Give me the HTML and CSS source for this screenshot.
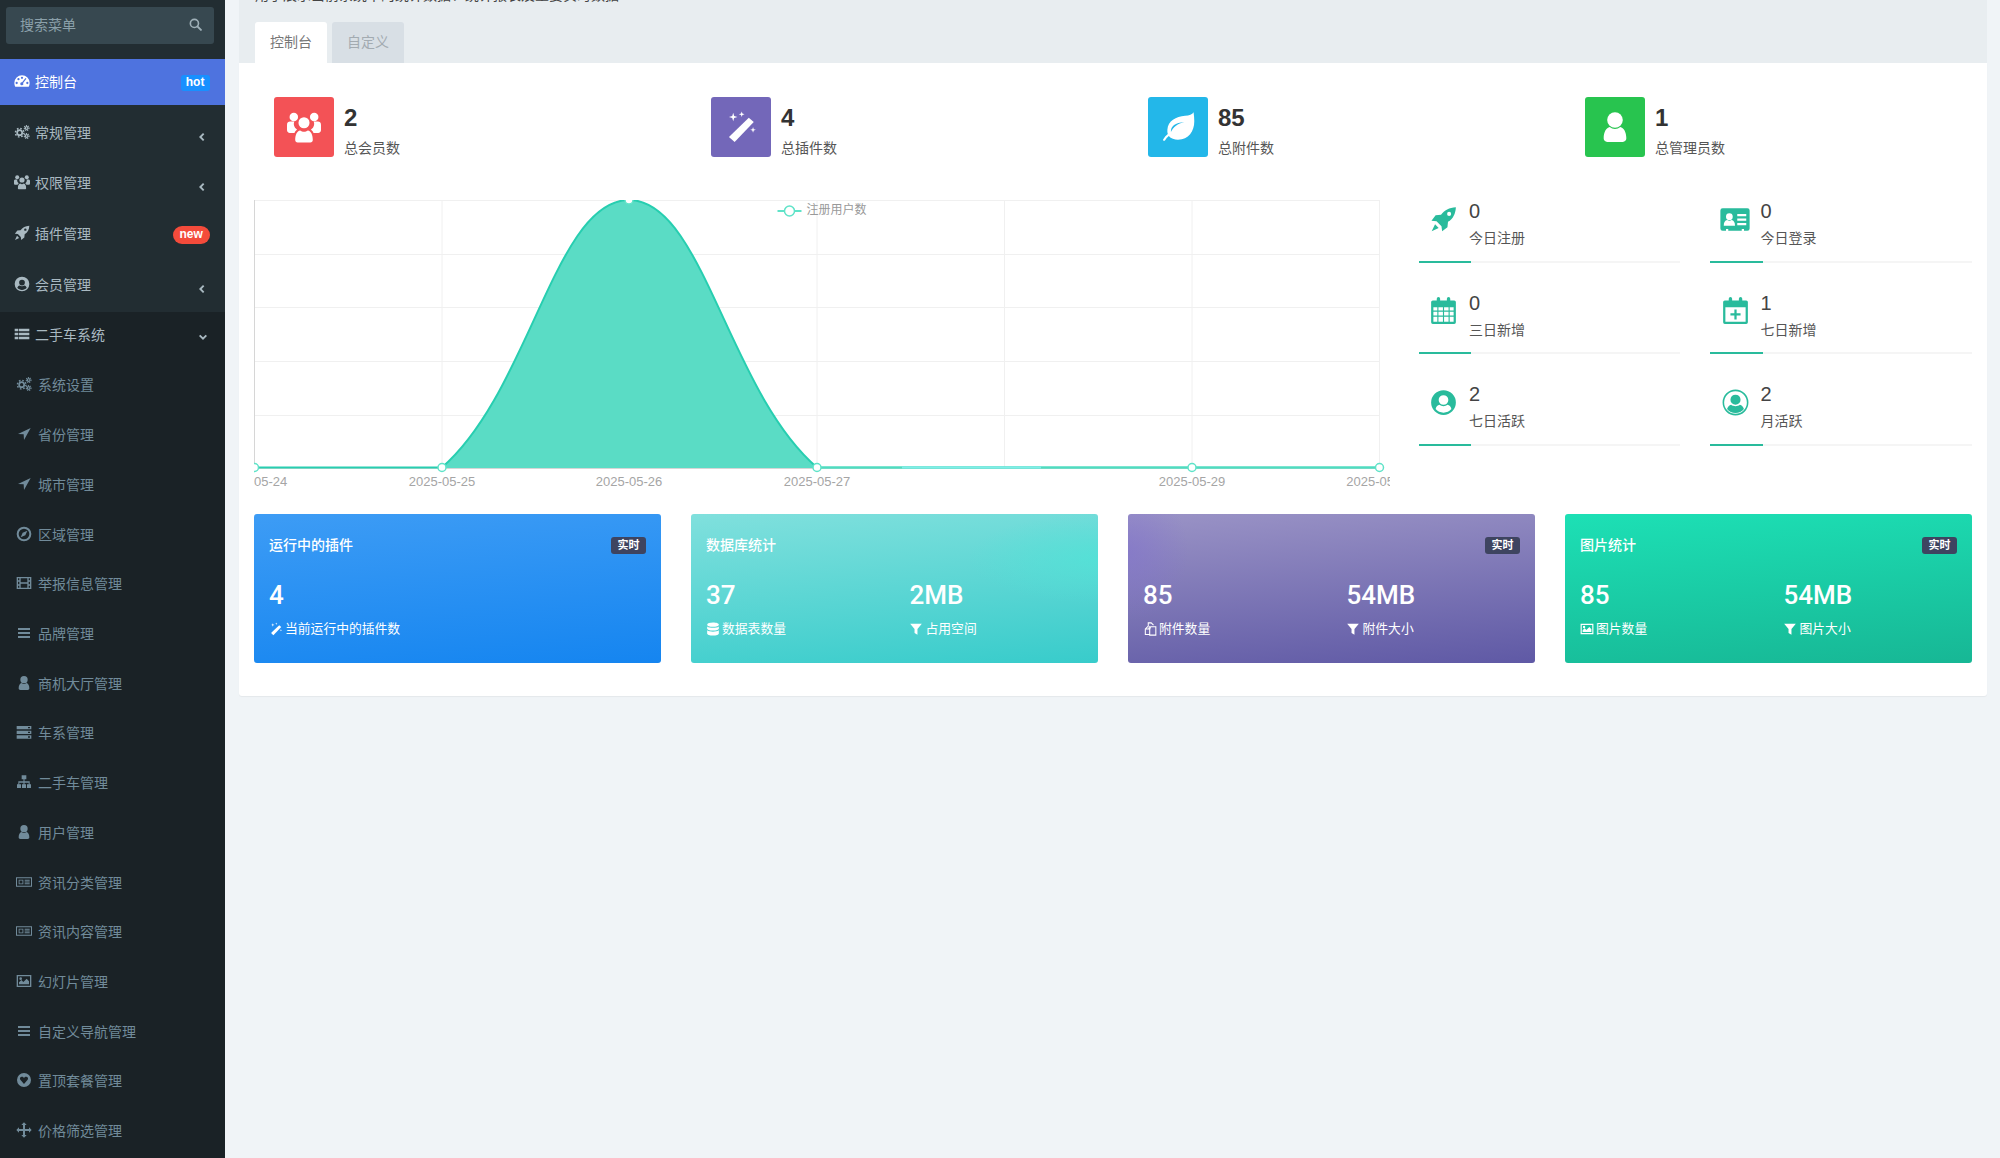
FILE: index.html
```html
<!DOCTYPE html>
<html lang="zh-CN">

<head>
  <meta charset="UTF-8" />
  <title>控制台</title>
  <link rel="stylesheet" href="styles.css">
</head>

<body>
  <!-- icon sprite -->
  <svg class="sprite" xmlns="http://www.w3.org/2000/svg">
    <symbol id="i-search" viewBox="0 0 24 24"><circle cx="10" cy="10" r="7.5" fill="none" stroke="currentColor" stroke-width="3"/><path d="M15.5 15.5 22 22" stroke="currentColor" stroke-width="3.6" stroke-linecap="round"/></symbol>
    <symbol id="i-dash" viewBox="0 0 24 24"><path fill="currentColor" fill-rule="evenodd" d="M12 3.5A11.5 11.5 0 0 0 .5 15c0 2 .5 3.9 1.4 5.5h20.2c.9-1.6 1.4-3.5 1.4-5.5A11.500 11.500 0 0 0 12 3.500zM4 13.300a1.700 1.700 0 1 1 0 3.400 1.700 1.700 0 0 1 0-3.400zM6.700 7.500a1.700 1.700 0 1 1 0 3.400 1.700 1.700 0 0 1 0-3.400zM12 5.500a1.700 1.700 0 1 1 0 3.400 1.700 1.700 0 0 1 0-3.400zM20 13.300a1.700 1.700 0 1 1 0 3.400 1.700 1.700 0 0 1 0-3.400zM17.300 7.500l1.300 1-4.900 6.400a2.300 2.300 0 1 1-1.500-1.100z"/></symbol>
    <symbol id="i-cogs" viewBox="0 0 24 24"><g fill="none" stroke="currentColor"><circle cx="8.500" cy="13" r="3.800" stroke-width="2.600"/><circle cx="8.500" cy="13" r="6.400" stroke-width="2.200" stroke-dasharray="2.500 2.530"/><circle cx="19" cy="6" r="2" stroke-width="1.800"/><circle cx="19" cy="6" r="3.600" stroke-width="1.600" stroke-dasharray="1.600 1.230"/><circle cx="19" cy="18" r="2" stroke-width="1.800"/><circle cx="19" cy="18" r="3.600" stroke-width="1.600" stroke-dasharray="1.600 1.230"/></g></symbol>
    <symbol id="i-group" viewBox="0 0 24 24"><g fill="currentColor"><circle cx="4.800" cy="5" r="3"/><circle cx="19.200" cy="5" r="3"/><path d="M0 10.500c0-1.500 1-2.300 2.200-2.300h3c-.5 1-.6 2.500.2 3.800.5.900 1.300 1.500 1.800 1.800-.8.600-1.500 1.300-1.900 2.400H2c-1.200 0-2-.8-2-2zM24 10.500c0-1.500-1-2.300-2.200-2.300h-3c.5 1 .6 2.500-.2 3.800-.5.900-1.300 1.500-1.800 1.800.8.600 1.500 1.300 1.900 2.400H22c1.200 0 2-.8 2-2z"/><circle cx="12" cy="9" r="3.900"/><path d="M7.500 23c-1 0-1.700-.7-1.700-1.800 0-3.500 1.200-6.500 3.500-6.800 1.600 1.300 3.800 1.300 5.400 0 2.300.3 3.500 3.300 3.500 6.800 0 1.100-.7 1.800-1.700 1.800z"/></g></symbol>
    <symbol id="i-rocket" viewBox="0 0 24 24"><path fill="currentColor" fill-rule="evenodd" d="M23 1c-5.800.3-10.300 2.700-13.200 6.800L5 8.300 1.300 13l4.500.6 4.400 4.400.6 4.500 4.700-3.700.5-4.800C20.600 11.300 22.700 6.800 23 1zM17 5.200a1.800 1.800 0 1 1 0 3.600 1.800 1.800 0 0 1 0-3.600zM4.500 16.300 1.500 22.500l6.200-3z"/></symbol>
    <symbol id="i-ucircle" viewBox="0 0 24 24"><path fill="currentColor" fill-rule="evenodd" d="M12 1a11 11 0 1 0 0 22 11 11 0 0 0 0-22zM12 5.500a4.300 4.300 0 1 1 0 8.600 4.300 4.300 0 0 1 0-8.600zM12 21c-2.800 0-5.300-1.200-7-3.200.5-2 1.800-3.400 3.400-3.700 2 1.600 5.200 1.600 7.200 0 1.600.3 2.900 1.700 3.400 3.700-1.700 2-4.200 3.200-7 3.200z"/></symbol>
    <symbol id="i-ucircle2" viewBox="0 0 24 24"><circle cx="12" cy="12" r="10.800" fill="none" stroke="currentColor" stroke-width="1.400"/><path fill="currentColor" d="M12 5a4.500 4.500 0 1 1 0 9 4.500 4.500 0 0 1 0-9zM4.500 17.800c.6-2 1.900-3.400 3.600-3.800 2.200 1.700 5.600 1.700 7.800 0 1.700.4 3 1.800 3.600 3.800-1.800 2.200-4.500 3.600-7.500 3.600s-5.700-1.400-7.500-3.600z"/></symbol>
    <symbol id="i-list" viewBox="0 0 24 24"><path fill="currentColor" d="M1 4h5v4H1zM7 4h16v4H7zM1 10h5v4H1zM7 10h16v4H7zM1 16h5v4H1zM7 16h16v4H7z"/></symbol>
    <symbol id="i-arrow" viewBox="0 0 24 24"><path fill="currentColor" d="M22 3 3 12l8.500.5L12 21z"/></symbol>
    <symbol id="i-compass" viewBox="0 0 24 24"><circle cx="12" cy="12" r="9.500" fill="none" stroke="currentColor" stroke-width="3"/><path fill="currentColor" d="m17 7-7 3-3 7 7-3z"/></symbol>
    <symbol id="i-film" viewBox="0 0 24 24"><path fill="currentColor" fill-rule="evenodd" d="M1 3h22v18H1zM3 5v3h2V5zM3 10v4h2v-4zM3 16v3h2v-3zM19 5v3h2V5zM19 10v4h2v-4zM19 16v3h2v-3zM7 5v6h10V5zM7 13v6h10v-6z"/></symbol>
    <symbol id="i-bars" viewBox="0 0 24 24"><path fill="currentColor" d="M3 4.500h18v3H3zM3 10.500h18v3H3zM3 16.500h18v3H3z"/></symbol>
    <symbol id="i-user" viewBox="0 0 24 24"><circle cx="12" cy="7" r="5.500" fill="currentColor"/><path fill="currentColor" d="M4 20c0-4.500 1.800-7.500 4.300-8 2 1.800 5.400 1.800 7.400 0 2.500.5 4.300 3.500 4.300 8 0 1.500-1 2.500-2.500 2.500h-11C5 22.500 4 21.500 4 20z"/></symbol>
    <symbol id="i-server" viewBox="0 0 24 24"><path fill="currentColor" fill-rule="evenodd" d="M1 3h22v5H1zM1 10h22v5H1zM1 17h22v5H1zM18 4.500v2h3v-2zM18 11.500v2h3v-2zM18 18.500v2h3v-2z"/></symbol>
    <symbol id="i-sitemap" viewBox="0 0 24 24"><path fill="currentColor" d="M8.500 2h7v6h-2.700v3H20.500v4.500h2V21h-6v-5.500h2.500V13h-6.200v2.500H15V21H9v-5.500h2.200V13H5v2.500h2.500V21h-6v-5.500h2V11h7.700V8H8.500z"/></symbol>
    <symbol id="i-news" viewBox="0 0 24 24"><path fill="currentColor" fill-rule="evenodd" d="M0 5h24v14H0zM1.500 6.500v11h21v-11zM4 8.500h7v7H4zM5.300 9.800v4.400h4.400V9.800zM13 8.500h7.500v1.500H13zM13 11.200h7.500v1.500H13zM13 14h7.500v1.500H13z"/></symbol>
    <symbol id="i-pic" viewBox="0 0 24 24"><path fill="currentColor" fill-rule="evenodd" d="M1 3h22v18H1zM3 5v14h18V5zM4.500 17v-3l3.500-3.500 3 3L16 8.500l3.500 4V17zM7 6.500a2 2 0 1 1 0 4 2 2 0 0 1 0-4z"/></symbol>
    <symbol id="i-heart" viewBox="0 0 24 24"><path fill="currentColor" fill-rule="evenodd" d="M12 1.500a10.500 10.500 0 1 0 0 21 10.500 10.500 0 0 0 0-21zM12 18l-5.500-6.300C5 9.500 6.500 7 8.700 7c1.500 0 2.500.8 3.300 2 .8-1.200 1.800-2 3.300-2 2.200 0 3.700 2.500 2.200 4.700z"/></symbol>
    <symbol id="i-move" viewBox="0 0 24 24"><path fill="currentColor" d="m12 .5 4 4h-2.500v6h6V8l4 4-4 4v-2.500h-6v6H16l-4 4-4-4h2.500v-6h-6V16l-4-4 4-4v2.500h6v-6H8z"/></symbol>
    <symbol id="i-left" viewBox="0 0 24 24"><path d="M16 4 8 12l8 8" fill="none" stroke="currentColor" stroke-width="4.500"/></symbol>
    <symbol id="i-down" viewBox="0 0 24 24"><path d="m4 8 8 8 8-8" fill="none" stroke="currentColor" stroke-width="4.500"/></symbol>
    <symbol id="i-wand" viewBox="0 0 24 24"><path fill="currentColor" d="M17.500 5.500 21 8.500 7.500 22.500 3.500 19z"/><path fill="currentColor" d="m6.500 2 .7 2.300 2.300.7-2.300.7-.7 2.300-.7-2.300L3.500 5l2.300-.7zM12.500 1l.5 1.500 1.500.5-1.500.5-.5 1.500-.5-1.500L10.500 3l1.500-.5zM20.500 12l.5 1.500 1.500.5-1.500.5-.5 1.500-.5-1.500-1.500-.5 1.500-.5z"/></symbol>
    <symbol id="i-leaf" viewBox="0 0 24 24"><path fill="currentColor" fill-rule="evenodd" d="M23 1.500c-1 1.500-3 2.300-6 2.600C10.500 4.800 5 7.500 4.500 14c-.1 1 0 2 .3 3-1.400 1.200-2.500 2.400-3.300 3.800-.4.700.8 1.400 1.300.7.700-1.200 1.700-2.300 2.700-3.200 1.500 1.800 4 2.700 6.500 2.700 7.500 0 11.500-6 11.500-13 0-2.300-.2-4.500-.5-6.500zM7 15.500c-.2-4 3-6.500 9.500-7-4.800 1.200-7.800 3.500-9.500 7z"/></symbol>
    <symbol id="i-card" viewBox="0 0 26 24"><path fill="currentColor" fill-rule="evenodd" d="M2 2h22a2 2 0 0 1 2 2v16a2 2 0 0 1-2 2h-3v-1.500h-2V22H7v-1.500H5V22H2a2 2 0 0 1-2-2V4a2 2 0 0 1 2-2zM8 6.500a3 3 0 1 0 0 6 3 3 0 0 0 0-6zM3 17.500h10c0-3-1.200-4.800-3-5-1.200.8-2.800.8-4 0-1.800.2-3 2-3 5zM15 7v2h8V7zM15 11v2h8v-2zM15 15v2h8v-2z"/></symbol>
    <symbol id="i-cal" viewBox="0 0 24 24"><path fill="currentColor" fill-rule="evenodd" d="M2.500 3H6V1.500a1.500 1.500 0 0 1 3 0V3h6V1.500a1.500 1.500 0 0 1 3 0V3h3.500A1.500 1.500 0 0 1 23 4.500v18a1.500 1.500 0 0 1-1.500 1.500h-19A1.500 1.500 0 0 1 1 22.500v-18A1.500 1.500 0 0 1 2.500 3zM3 9v3h3.500V9zM7.500 9v3h4V9zM12.500 9v3h4V9zM17.500 9v3H21V9zM3 13v3.500h3.500V13zM7.500 13v3.500h4V13zM12.500 13v3.500h4V13zM17.500 13v3.500H21V13zM3 17.500V22h3.500v-4.500zM7.500 17.500V22h4v-4.500zM12.500 17.500V22h4v-4.500zM17.500 17.500V22H21v-4.500z"/></symbol>
    <symbol id="i-calplus" viewBox="0 0 24 24"><path fill="currentColor" fill-rule="evenodd" d="M2.500 3H6V1.500a1.500 1.500 0 0 1 3 0V3h6V1.500a1.500 1.500 0 0 1 3 0V3h3.500A1.500 1.500 0 0 1 23 4.500v18a1.500 1.500 0 0 1-1.500 1.500h-19A1.500 1.500 0 0 1 1 22.500v-18A1.500 1.500 0 0 1 2.500 3zM3 9v13h18V9zM11 11h2v3.500h3.500v2H13V20h-2v-3.500H7.500v-2H11z"/></symbol>
    <symbol id="i-db" viewBox="0 0 24 24"><path fill="currentColor" d="M12 1c5.500 0 10 1.500 10 3.500S17.500 8 12 8 2 6.500 2 4.500 6.500 1 12 1zM2 7.500C4 9.200 8 10 12 10s8-.8 10-2.500V11c0 2-4.500 3.500-10 3.500S2 13 2 11zM2 14c2 1.700 6 2.500 10 2.500s8-.8 10-2.500v5.500c0 2-4.500 3.500-10 3.500S2 21.500 2 19.500z"/></symbol>
    <symbol id="i-filter" viewBox="0 0 24 24"><path fill="currentColor" d="M2 3h20l-7.500 9v10l-5-3v-7z"/></symbol>
    <symbol id="i-files" viewBox="0 0 24 24"><path fill="none" stroke="currentColor" stroke-width="1.800" d="M9 7V1.500h5l4 4M9 7 4 12v9.500h7M11 7l-1 5H5M13 8h9v14.500H11.500V13z"/></symbol>
  </svg>

  <aside class="sidebar">
    <div class="search-box">
      <span>搜索菜单</span>
      <svg class="search-icon"><use href="#i-search"/></svg>
    </div>
    <ul class="menu">
      <li class="menu-item active">
        <svg class="icon"><use href="#i-dash"/></svg><span class="menu-text">控制台</span><em class="tag tag-hot">hot</em>
      </li>
      <li class="menu-item">
        <svg class="icon"><use href="#i-cogs"/></svg><span class="menu-text">常规管理</span><svg class="caret"><use href="#i-left"/></svg>
      </li>
      <li class="menu-item">
        <svg class="icon"><use href="#i-group"/></svg><span class="menu-text">权限管理</span><svg class="caret"><use href="#i-left"/></svg>
      </li>
      <li class="menu-item">
        <svg class="icon"><use href="#i-rocket"/></svg><span class="menu-text">插件管理</span><em class="tag tag-new">new</em>
      </li>
      <li class="menu-item">
        <svg class="icon"><use href="#i-ucircle"/></svg><span class="menu-text">会员管理</span><svg class="caret"><use href="#i-left"/></svg>
      </li>
      <li class="menu-open">
        <div class="menu-item open-head">
          <svg class="icon"><use href="#i-list"/></svg><span class="menu-text">二手车系统</span><svg class="caret caret-down"><use href="#i-down"/></svg>
        </div>
        <ul class="submenu">
          <li><svg class="icon"><use href="#i-cogs"/></svg>系统设置</li>
          <li><svg class="icon"><use href="#i-arrow"/></svg>省份管理</li>
          <li><svg class="icon"><use href="#i-arrow"/></svg>城市管理</li>
          <li><svg class="icon"><use href="#i-compass"/></svg>区域管理</li>
          <li><svg class="icon"><use href="#i-film"/></svg>举报信息管理</li>
          <li><svg class="icon"><use href="#i-bars"/></svg>品牌管理</li>
          <li><svg class="icon"><use href="#i-user"/></svg>商机大厅管理</li>
          <li><svg class="icon"><use href="#i-server"/></svg>车系管理</li>
          <li><svg class="icon"><use href="#i-sitemap"/></svg>二手车管理</li>
          <li><svg class="icon"><use href="#i-user"/></svg>用户管理</li>
          <li><svg class="icon"><use href="#i-news"/></svg>资讯分类管理</li>
          <li><svg class="icon"><use href="#i-news"/></svg>资讯内容管理</li>
          <li><svg class="icon"><use href="#i-pic"/></svg>幻灯片管理</li>
          <li><svg class="icon"><use href="#i-bars"/></svg>自定义导航管理</li>
          <li><svg class="icon"><use href="#i-heart"/></svg>置顶套餐管理</li>
          <li><svg class="icon"><use href="#i-move"/></svg>价格筛选管理</li>
        </ul>
      </li>
    </ul>
  </aside>

  <main class="content">
    <div class="panel-head">
      <p class="page-desc">用于展示当前系统中的统计数据、统计报表及重要实时数据</p>
      <div class="tabs">
        <a class="tab current">控制台</a>
        <a class="tab">自定义</a>
      </div>
    </div>

    <div class="panel-body">
      <div class="top-stats">
        <div class="top-stat">
          <div class="stat-box bg-red"><svg><use href="#i-group"/></svg></div>
          <div><div class="stat-num">2</div><div class="stat-label">总会员数</div></div>
        </div>
        <div class="top-stat">
          <div class="stat-box bg-purple"><svg><use href="#i-wand"/></svg></div>
          <div><div class="stat-num">4</div><div class="stat-label">总插件数</div></div>
        </div>
        <div class="top-stat">
          <div class="stat-box bg-blue"><svg><use href="#i-leaf"/></svg></div>
          <div><div class="stat-num">85</div><div class="stat-label">总附件数</div></div>
        </div>
        <div class="top-stat">
          <div class="stat-box bg-green"><svg><use href="#i-user"/></svg></div>
          <div><div class="stat-num">1</div><div class="stat-label">总管理员数</div></div>
        </div>
      </div>

      <div class="chart-row">
        <svg class="chart" viewBox="0 0 1136 290">
          <g class="grid-lines">
            <path d="M0 .5H1126M0 54.500H1126M0 107.500H1126M0 161.500H1126M0 215.500H1126"/>
            <path d="M188 0V268M375 0V268M563 0V268M750.500 0V268M938 0V268M1125.500 0V268"/>
          </g>
          <path class="axis" d="M.5 0V268.500H1126"/>
          <path class="area" d="M188 268C276 191 301 0 375 0C449 0 474 191 563 268Z"/>
          <path class="line" d="M0 267.500H188C276 191 301 0 375 0C449 0 474 191 563 267.500"/>
          <path class="base-line" d="M563 267.500H1126"/>
          <path class="base-glint" d="M648 267.500H787"/>
          <g class="points">
            <circle cx=".5" cy="267.500" r="4"/>
            <circle cx="188" cy="267.500" r="4"/>
            <circle cx="375" cy="0" r="4"/>
            <circle cx="563" cy="267.500" r="4"/>
            <circle cx="938" cy="267.500" r="4"/>
            <circle cx="1125.500" cy="267.500" r="4"/>
          </g>
          <path class="legend-line" d="M523.500 11H547.500"/>
          <circle class="legend-dot" cx="535.500" cy="11" r="5"/>
          <text class="legend-text" x="552.500" y="14">注册用户数</text>
          <g class="x-labels">
            <text x="0" y="286">2025-05-24</text>
            <text x="188" y="286">2025-05-25</text>
            <text x="375" y="286">2025-05-26</text>
            <text x="563" y="286">2025-05-27</text>
            <text x="938" y="286">2025-05-29</text>
            <text x="1125.500" y="286">2025-05-30</text>
          </g>
        </svg>

        <div class="side-stats">
          <div class="side-stat">
            <div class="side-top"><div class="side-icon"><svg><use href="#i-rocket"/></svg></div><div><div class="side-num">0</div><div class="side-label">今日注册</div></div></div>
            <div class="progress"><div class="progress-bar"></div></div>
          </div>
          <div class="side-stat">
            <div class="side-top"><div class="side-icon"><svg class="wide"><use href="#i-card"/></svg></div><div><div class="side-num">0</div><div class="side-label">今日登录</div></div></div>
            <div class="progress"><div class="progress-bar"></div></div>
          </div>
          <div class="side-stat">
            <div class="side-top"><div class="side-icon"><svg><use href="#i-cal"/></svg></div><div><div class="side-num">0</div><div class="side-label">三日新增</div></div></div>
            <div class="progress"><div class="progress-bar"></div></div>
          </div>
          <div class="side-stat">
            <div class="side-top"><div class="side-icon"><svg><use href="#i-calplus"/></svg></div><div><div class="side-num">1</div><div class="side-label">七日新增</div></div></div>
            <div class="progress"><div class="progress-bar"></div></div>
          </div>
          <div class="side-stat">
            <div class="side-top"><div class="side-icon"><svg><use href="#i-ucircle"/></svg></div><div><div class="side-num">2</div><div class="side-label">七日活跃</div></div></div>
            <div class="progress"><div class="progress-bar"></div></div>
          </div>
          <div class="side-stat">
            <div class="side-top"><div class="side-icon"><svg><use href="#i-ucircle2"/></svg></div><div><div class="side-num">2</div><div class="side-label">月活跃</div></div></div>
            <div class="progress"><div class="progress-bar"></div></div>
          </div>
        </div>
      </div>

      <div class="cards">
        <div class="card card-blue">
          <div class="card-head"><span>运行中的插件</span><b class="badge">实时</b></div>
          <div class="card-cols">
            <div><div class="card-num">4</div><div class="card-sub"><svg><use href="#i-wand"/></svg>当前运行中的插件数</div></div>
          </div>
        </div>
        <div class="card card-teal">
          <div class="card-head"><span>数据库统计</span></div>
          <div class="card-cols">
            <div><div class="card-num">37</div><div class="card-sub"><svg><use href="#i-db"/></svg>数据表数量</div></div>
            <div><div class="card-num">2MB</div><div class="card-sub"><svg><use href="#i-filter"/></svg>占用空间</div></div>
          </div>
        </div>
        <div class="card card-violet">
          <div class="card-head"><b class="badge">实时</b></div>
          <div class="card-cols">
            <div><div class="card-num">85</div><div class="card-sub"><svg><use href="#i-files"/></svg>附件数量</div></div>
            <div><div class="card-num">54MB</div><div class="card-sub"><svg><use href="#i-filter"/></svg>附件大小</div></div>
          </div>
        </div>
        <div class="card card-mint">
          <div class="card-head"><span>图片统计</span><b class="badge">实时</b></div>
          <div class="card-cols">
            <div><div class="card-num">85</div><div class="card-sub"><svg><use href="#i-pic"/></svg>图片数量</div></div>
            <div><div class="card-num">54MB</div><div class="card-sub"><svg><use href="#i-filter"/></svg>图片大小</div></div>
          </div>
        </div>
      </div>
    </div>
  </main>
</body>

</html>
```

FILE: styles.css
```css
* {
  box-sizing: border-box;
}

html,
body {
  height: 100%;
}

body {
  margin: 0;
  display: flex;
  overflow: hidden;
  background: #f0f4f7;
  font-family: "Liberation Sans", "Noto Sans CJK SC", sans-serif;
  font-size: 14px;
  color: #333;
}

ul {
  list-style: none;
  margin: 0;
  padding: 0;
}

.sprite {
  display: none;
}

/* sidebar */
.sidebar {
  flex: 0 0 224.6px;
  height: 100%;
  overflow: hidden;
  background: #222d32;
  padding-top: 7px;
}

.search-box {
  display: flex;
  justify-content: space-between;
  align-items: center;
  height: 37px;
  margin: 0 10.500px 15px 6px;
  padding: 0 12px 3px 14px;
  background: #374850;
  border-radius: 3px;
  color: #8ba0aa;
}

.search-icon {
  width: 13px;
  height: 13px;
  color: #9fb0b8;
}

.menu-item {
  display: flex;
  align-items: center;
  height: 45.6px;
  margin-bottom: 5px;
  padding: 0 15px 1px 13.500px;
  color: #a9b9c1;
}

.menu-item .icon {
  width: 16px;
  height: 16px;
  margin-right: 5.500px;
  flex: none;
}

.menu-text {
  flex: 1;
}

.menu-item.active {
  background: #4e73df;
  color: #fff;
}

.tag {
  font-style: normal;
  font-weight: bold;
  font-size: 12px;
  color: #fff;
  text-align: center;
  margin-top: 3px;
}

.tag-hot {
  width: 29px;
  height: 16px;
  line-height: 15px;
  background: #1890ff;
  border-radius: 3px;
}

.tag-new {
  width: 37px;
  height: 18px;
  line-height: 17px;
  background: #f44b3b;
  border-radius: 9px;
  margin-top: 4px;
}

.caret {
  width: 10px;
  height: 10px;
  margin-top: 10px;
  margin-right: 3px;
}

.caret-down {
  margin-top: 6px;
  margin-right: 2px;
}

.menu-open {
  background: #1a2226;
  padding-bottom: 40px;
}

.open-head {
  margin-bottom: 0;
}

.submenu {
  padding-top: 2px;
}

.submenu li {
  display: flex;
  align-items: center;
  height: 49.720px;
  padding-left: 15.500px;
  color: #718b9a;
}

.submenu .icon {
  width: 16px;
  height: 16px;
  margin-right: 6.500px;
  flex: none;
}

/* main area */
.content {
  flex: 1;
  min-width: 0;
  padding: 0 13px 0 14.400px;
}

.panel-head {
  display: flow-root;
  background: #e8edf0;
  height: 63px;
  padding-left: 16px;
}

.page-desc {
  margin: -15px 0 0;
  height: 37px;
  line-height: 20px;
  color: #444;
}

.tabs {
  display: flex;
  gap: 5px;
}

.tab {
  width: 72px;
  height: 41px;
  line-height: 41px;
  text-align: center;
  background: #d8dfe5;
  color: #a3abb1;
  border-radius: 3px 3px 0 0;
}

.tab.current {
  background: #fff;
  color: #777;
}

.panel-body {
  background: #fff;
  padding: 34px 15px 33px;
  border-radius: 0 0 3px 3px;
  box-shadow: 0 1px 1px rgba(0, 0, 0, .05);
}

.top-stats {
  display: grid;
  grid-template-columns: repeat(4, 1fr);
  column-gap: 50px;
  padding-left: 20px;
  margin-bottom: 42px;
}

.top-stat {
  display: flex;
}

.stat-box {
  width: 60px;
  height: 60px;
  margin-right: 10px;
  border-radius: 3px;
  color: #fff;
  display: flex;
  align-items: center;
  justify-content: center;
}

.stat-box svg {
  width: 34px;
  height: 34px;
}

.bg-red {
  background: #f35256;
}

.bg-purple {
  background: #7367b9;
}

.bg-blue {
  background: #23b7e9;
}

.bg-green {
  background: #28c44f;
}

.stat-num {
  font-size: 24px;
  font-weight: bold;
  line-height: 30px;
  margin-top: 6px;
  color: #333;
}

.stat-label {
  line-height: 20px;
  margin-top: 5px;
  color: #555;
}

/* chart */
.chart-row {
  display: flex;
  height: 314px;
}

.chart {
  flex: 0 0 1136px;
  width: 1136px;
  height: 290px;
  overflow: hidden;
}

.grid-lines path {
  fill: none;
  stroke: #f0f0f0;
}

.axis {
  fill: none;
  stroke: #d6d6d6;
}

.area {
  fill: #5adcc5;
}

.line {
  fill: none;
  stroke: #27ceb0;
  stroke-width: 2;
}

.base-line {
  fill: none;
  stroke: #4fdcc0;
  stroke-width: 2.500;
}

.base-glint {
  fill: none;
  stroke: #7feee8;
  stroke-width: 2;
}

.points circle {
  fill: #fff;
  stroke: #5fe3c8;
  stroke-width: 1.500;
}

.legend-line {
  stroke: #5fe3c8;
  stroke-width: 2;
}

.legend-dot {
  fill: #fff;
  stroke: #5fe3c8;
  stroke-width: 1.500;
}

.legend-text {
  font-size: 12px;
  fill: #999;
}

.x-labels text {
  font-size: 13px;
  fill: #a5a5a5;
  text-anchor: middle;
}

.side-stats {
  flex: 1;
  margin-left: 29px;
  display: grid;
  grid-template-columns: 1fr 1fr;
  grid-auto-rows: 62.500px;
  column-gap: 30px;
  row-gap: 29px;
}

.side-stat {
  display: flex;
  flex-direction: column;
  justify-content: space-between;
}

.side-top {
  display: flex;
}

.side-icon {
  width: 50px;
  height: 38px;
  display: flex;
  align-items: center;
  justify-content: center;
  color: #29bb9c;
}

.side-icon svg {
  width: 27px;
  height: 27px;
}

.side-icon svg.wide {
  width: 30px;
}

.side-num {
  font-size: 20px;
  line-height: 22px;
  color: #444;
}

.side-label {
  line-height: 20px;
  margin-top: 6px;
  color: #555;
}

.progress {
  height: 2px;
  background: #f5f5f5;
}

.progress-bar {
  width: 20%;
  height: 2px;
  background: #29bb9c;
}

/* bottom cards */
.cards {
  display: grid;
  grid-template-columns: repeat(4, 1fr);
  column-gap: 30px;
}

.card {
  height: 149px;
  padding: 20px 15px;
  border-radius: 3px;
  color: #fff;
}

.card-blue {
  background: linear-gradient(175deg, #3d9cf5, #1585f0);
}

.card-teal {
  background: radial-gradient(ellipse 130px 45px at 100% 30%, rgba(80, 228, 215, .7), transparent),
    linear-gradient(175deg, #80e0dd, #38cccb);
}

.card-violet {
  background: radial-gradient(ellipse 60px 70px at 0 25%, rgba(130, 115, 205, .6), transparent),
    linear-gradient(175deg, #9a93c6, #5f59a5);
}

.card-mint {
  background: linear-gradient(175deg, #1de0b5, #17b795);
}

.card-head {
  display: flex;
  justify-content: space-between;
  align-items: center;
  height: 20px;
  font-weight: 500;
}

.badge {
  margin-left: auto;
  margin-top: 2px;
  width: 35px;
  height: 17px;
  line-height: 16px;
  text-align: center;
  font-size: 11px;
  background: #3e4460;
  border-radius: 3px;
}

.card-cols {
  display: grid;
  grid-template-columns: 203.500px 1fr;
  margin-top: 23px;
}

.card-num {
  font-family: Roboto, sans-serif;
  font-size: 26px;
  font-weight: 500;
  line-height: 36px;
}

.card-sub {
  display: flex;
  align-items: center;
  line-height: 20px;
  margin-top: 6px;
  font-size: 12.800px;
}

.card-sub svg {
  width: 14px;
  height: 14px;
  margin-right: 2px;
}
```
